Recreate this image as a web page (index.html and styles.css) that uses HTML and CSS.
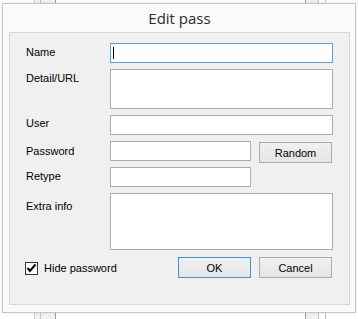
FILE: index.html
```html
<!DOCTYPE html>
<html lang="en">
<head>
    <meta charset="utf-8" />
    <title>Edit pass</title>
    <link rel="stylesheet" href="styles.css">
</head>
<body>
    <div class="dialog">
        <div class="dialog-title">Edit pass</div>

        <div class="panel">
            <div class="row">
                <span class="row-label">Name</span>
                <div class="field focused"><span class="caret"></span></div>
            </div>
            <div class="row">
                <span class="row-label">Detail/URL</span>
                <div class="field tall"></div>
            </div>
            <div class="row">
                <span class="row-label up">User</span>
                <div class="field"></div>
            </div>
            <div class="row">
                <span class="row-label down">Password</span>
                <div class="field short"></div>
                <button class="btn btn-random">Random</button>
            </div>
            <div class="row">
                <span class="row-label">Retype</span>
                <div class="field short"></div>
            </div>
            <div class="row">
                <span class="row-label low">Extra info</span>
                <div class="field extra"></div>
            </div>

            <div class="footer">
                <label class="check">
                    <span class="check-box">
                        <svg width="11" height="11" viewBox="0 0 11 11">
                            <path d="M1.5 5 L4 8 L9.5 1.5" fill="none" stroke="#000" stroke-width="2" />
                        </svg>
                    </span>
                    Hide password
                </label>
                <button class="btn btn-default">OK</button>
                <button class="btn">Cancel</button>
            </div>
        </div>
    </div>
</body>
</html>
```

FILE: styles.css
```css
body {
    margin: 0;
    font-family: "Liberation Sans", Arial, sans-serif;
    font-size: 11px;
    color: #000;
    background:
        linear-gradient(to right,
            #fff 34px, #c4c4c4 34px 35px, #f2f2f2 35px 40px, #c4c4c4 40px 41px,
            #f2f2f2 41px 55px, #9a9a9a 55px 56px, #fff 56px 305px,
            #9a9a9a 305px 306px, #f2f2f2 306px 318px, #c4c4c4 318px 319px,
            #fff 319px 325px, #c4c4c4 325px 326px, #fff 326px);
    height: 319px;
    overflow: hidden;
}

.dialog {
    margin: 3px 0 0 2px;
    width: 354px;
    height: 310px;
    box-sizing: border-box;
    border: 1px solid #c6c6c6;
    background: #fafafa;
    box-shadow: 0 0 3px rgba(0, 0, 0, 0.12);
    padding: 0 5px 7px 6px;
    display: flex;
    flex-direction: column;
}

.dialog-title {
    height: 28px;
    line-height: 28px;
    text-align: center;
    font-family: "Open Sans", "Noto Sans", sans-serif;
    font-size: 15px;
    color: #2b2b2b;
}

.panel {
    flex: 1;
    border: 1px solid #d6d6d6;
    background: #f0f0f0;
    padding: 10px 16px 0 16px;
}

.row {
    display: flex;
    align-items: flex-start;
    margin-bottom: 6px;
}

.row-label {
    width: 84px;
    flex: none;
    padding-top: 3px;
    line-height: 13px;
}

.row-label.up {
    padding-top: 2px;
}

.row-label.down {
    padding-top: 4px;
}

.row-label.low {
    padding-top: 7px;
}

.field {
    flex: 1;
    height: 20px;
    box-sizing: border-box;
    border: 1px solid #acacac;
    background: #fff;
    position: relative;
}

.field.focused {
    border-color: #5a9ee6;
}

.field.tall {
    height: 40px;
}

.field.short {
    flex: none;
    width: 141px;
}

.field.extra {
    height: 57px;
}

.caret {
    position: absolute;
    left: 2px;
    top: 3px;
    width: 1px;
    height: 12px;
    background: #000;
}

.btn {
    width: 73px;
    height: 21px;
    margin: 0 0 0 8px;
    padding: 0;
    box-sizing: border-box;
    border: 1px solid #acacac;
    border-radius: 0;
    background: linear-gradient(#f0f0f0, #e5e5e5);
    font-family: "Liberation Sans", Arial, sans-serif;
    font-size: 11px;
    color: #000;
}

.btn-random {
    margin-top: 1px;
    margin-bottom: -2px;
}

.btn-default {
    margin-left: auto;
    border-color: #3c8ef3;
}

.footer {
    display: flex;
    align-items: center;
    margin-top: 7px;
    padding-right: 1px;
}

.check {
    display: flex;
    align-items: center;
    gap: 6px;
    margin-left: -1px;
    margin-top: 1px;
}

.check-box {
    width: 13px;
    height: 13px;
    box-sizing: border-box;
    border: 1px solid #333;
    background: #fff;
    display: flex;
}
```
